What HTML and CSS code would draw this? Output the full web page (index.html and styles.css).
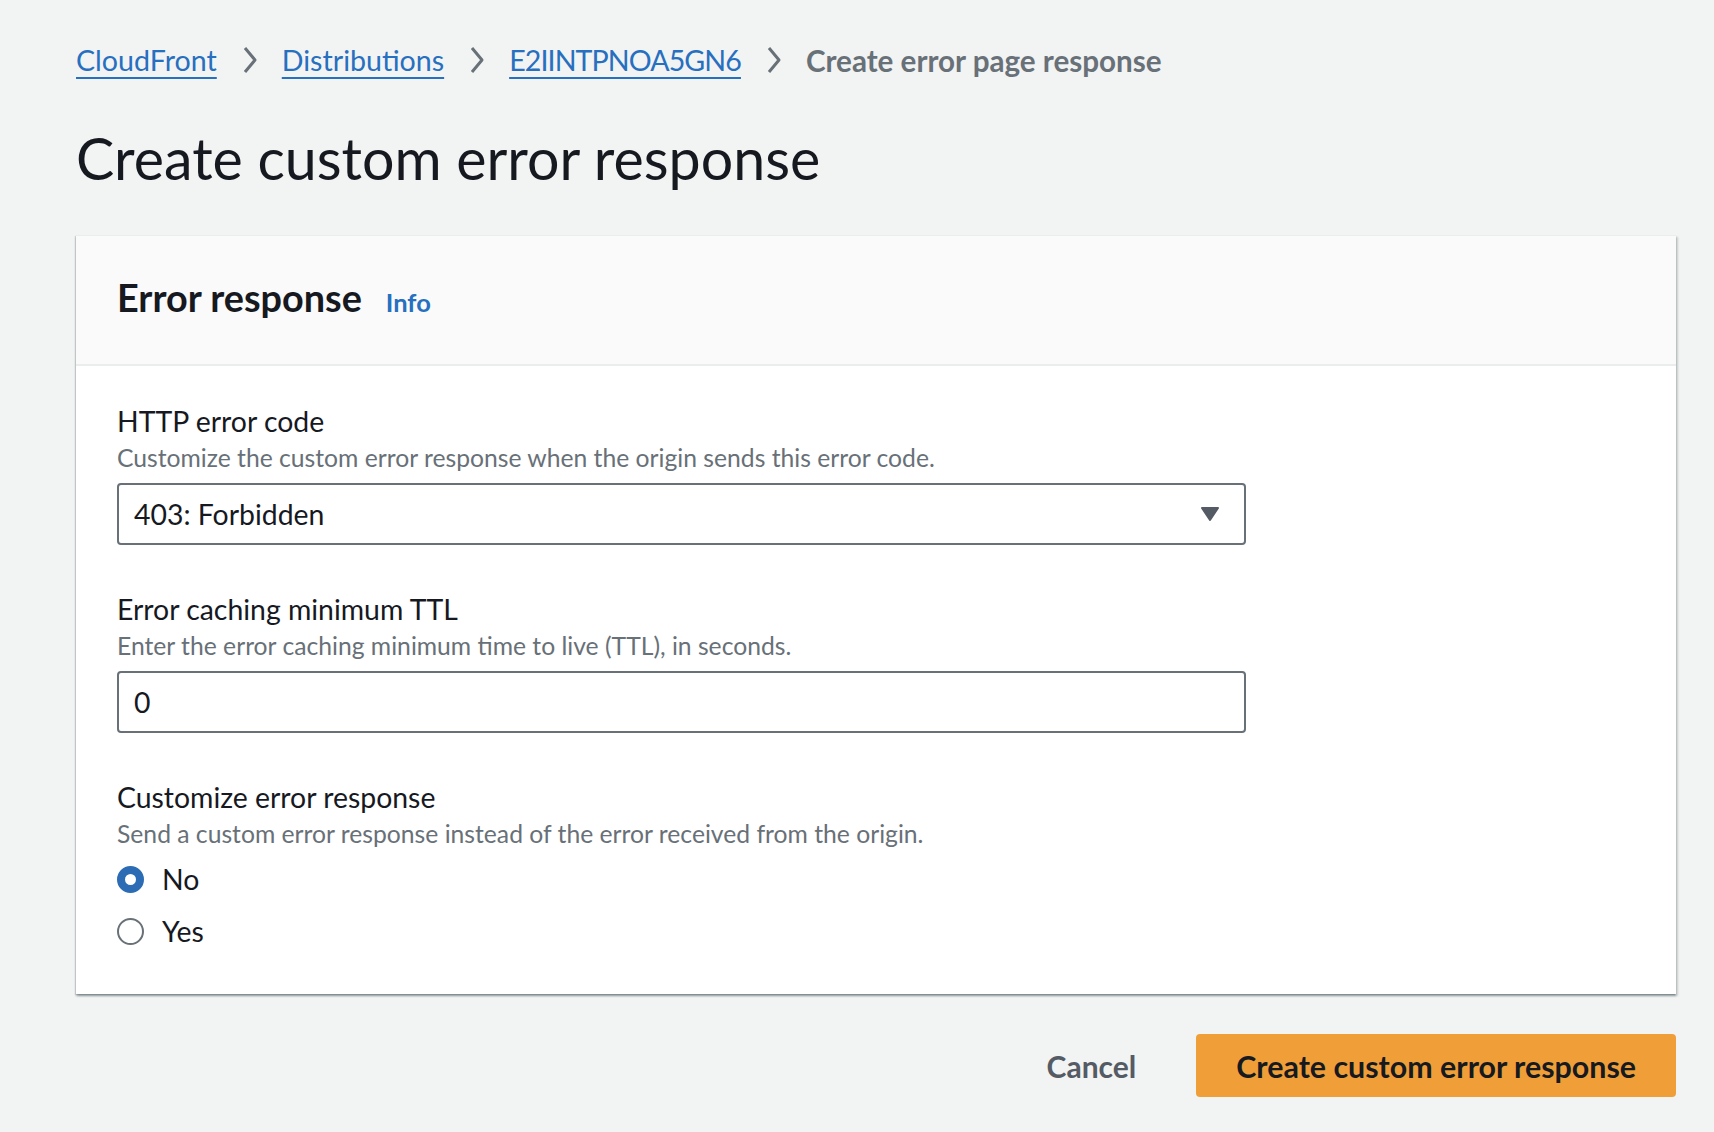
FILE: index.html
```html
<!DOCTYPE html>
<html lang="en">
<head>
<meta charset="utf-8">
<title>Create custom error response</title>
<link rel="stylesheet" href="styles.css">
</head>
<body>
<div class="page">
  <nav class="crumbs">
    <a class="crumb-link" href="#">CloudFront</a>
    <svg class="chev" viewBox="0 0 16 28" width="16" height="28"><path d="M3 2 L13 14 L3 26" fill="none" stroke="#687078" stroke-width="3" stroke-linejoin="round"/></svg>
    <a class="crumb-link" href="#">Distributions</a>
    <svg class="chev" viewBox="0 0 16 28" width="16" height="28"><path d="M3 2 L13 14 L3 26" fill="none" stroke="#687078" stroke-width="3" stroke-linejoin="round"/></svg>
    <a class="crumb-link crumb-id" href="#">E2IINTPNOA5GN6</a>
    <svg class="chev" viewBox="0 0 16 28" width="16" height="28"><path d="M3 2 L13 14 L3 26" fill="none" stroke="#687078" stroke-width="3" stroke-linejoin="round"/></svg>
    <span class="crumb-current">Create error page response</span>
  </nav>

  <h1 class="title">Create custom error response</h1>

  <section class="card">
    <header class="card-head">
      <h2 class="card-title">Error response</h2>
      <a class="info" href="#">Info</a>
    </header>
    <div class="card-body">
      <div class="field">
        <div class="label">HTTP error code</div>
        <div class="desc">Customize the custom error response when the origin sends this error code.</div>
        <div class="control select">
          <span>403: Forbidden</span>
          <svg class="caret" viewBox="0 0 20 16" width="20" height="16"><path d="M2 2 L18 2 L10 14 Z" fill="#545b64" stroke="#545b64" stroke-width="2" stroke-linejoin="round"/></svg>
        </div>
      </div>
      <div class="field">
        <div class="label">Error caching minimum TTL</div>
        <div class="desc">Enter the error caching minimum time to live (TTL), in seconds.</div>
        <div class="control"><span>0</span></div>
      </div>
      <div class="field">
        <div class="label">Customize error response</div>
        <div class="desc">Send a custom error response instead of the error received from the origin.</div>
        <div class="radios">
          <div class="radio-row"><span class="radio checked"></span><span class="radio-text">No</span></div>
          <div class="radio-row"><span class="radio"></span><span class="radio-text">Yes</span></div>
        </div>
      </div>
    </div>
  </section>

  <div class="actions">
    <button class="btn-link">Cancel</button>
    <button class="btn-primary">Create custom error response</button>
  </div>
</div>
</body>
</html>
```
FILE: styles.css
```css
* { box-sizing: border-box; }
html, body { margin: 0; padding: 0; }
body {
  background: #f2f3f3;
  font-family: "Lato", "Open Sans", sans-serif;
  color: #16191f;
}
.page {
  padding: 40px 38px 40px 76px;
}
.crumbs {
  display: flex;
  align-items: center;
  height: 40px;
  font-size: 28.6px;
}
.crumb-link {
  color: #276fbf;
  text-decoration: underline;
  text-decoration-thickness: 2px;
  text-underline-offset: 6px;
}
.crumb-id { letter-spacing: -0.9px; }
.chev { margin: 0 24px 0 25px; }
.crumb-current {
  color: #687078;
  font-weight: 700;
  font-size: 29.6px;
}
.title {
  margin: 42px 0 41px;
  font-size: 57.3px;
  line-height: 72px;
  font-weight: 400;
  color: #16191f;
}
.card {
  background: #fff;
  border-top: 1px solid #eaeded;
  box-shadow: 0 2px 2px 0 rgba(0,28,36,0.3), 2px 2px 2px 0 rgba(0,28,36,0.15), -1px 1px 1px 0 rgba(0,28,36,0.12);
}
.card-head {
  background: #fafafa;
  border-bottom: 2px solid #eaeded;
  padding: 38px 42px 42px 41px;
  display: flex;
  align-items: baseline;
  gap: 24px;
}
.card-title {
  margin: 0;
  font-size: 37.8px;
  line-height: 48px;
  font-weight: 700;
}
.info {
  color: #276fbf;
  font-weight: 700;
  font-size: 25.5px;
  text-decoration: none;
}
.card-body {
  padding: 35px 41px 41px 41px;
  display: flex;
  flex-direction: column;
  gap: 44px;
}
.label {
  font-size: 28.4px;
  line-height: 40px;
}
.desc {
  font-size: 24.7px;
  line-height: 34px;
  color: #687078;
}
.control {
  margin-top: 8px;
  width: 1129px;
  height: 62px;
  border: 2px solid #687078;
  border-radius: 4px;
  background: #fff;
  display: flex;
  align-items: center;
  justify-content: space-between;
  padding: 0 24px 0 15px;
  font-size: 28.4px;
}
.radios {
  margin-top: 6px;
  display: flex;
  flex-direction: column;
  gap: 8px;
}
.radio-row {
  display: flex;
  align-items: center;
  height: 44px;
}
.radio {
  width: 27px;
  height: 27px;
  border-radius: 50%;
  border: 2px solid #687078;
  background: #fff;
  margin-right: 18px;
}
.radio.checked {
  border: 8px solid #2b6cb4;
}
.radio-text {
  font-size: 28.4px;
}
.actions {
  margin-top: 40px;
  display: flex;
  justify-content: flex-end;
  align-items: center;
}
.btn-link {
  background: none;
  border: 0;
  font-family: inherit;
  font-size: 30px;
  font-weight: 700;
  color: #545b64;
  padding: 0 20px;
  margin-right: 40px;
}
.btn-primary {
  font-family: inherit;
  height: 63px;
  border: 0;
  border-radius: 4px;
  background: #f09f38;
  color: #16191f;
  font-size: 30.4px;
  font-weight: 700;
  padding: 0 40px;
}
```
